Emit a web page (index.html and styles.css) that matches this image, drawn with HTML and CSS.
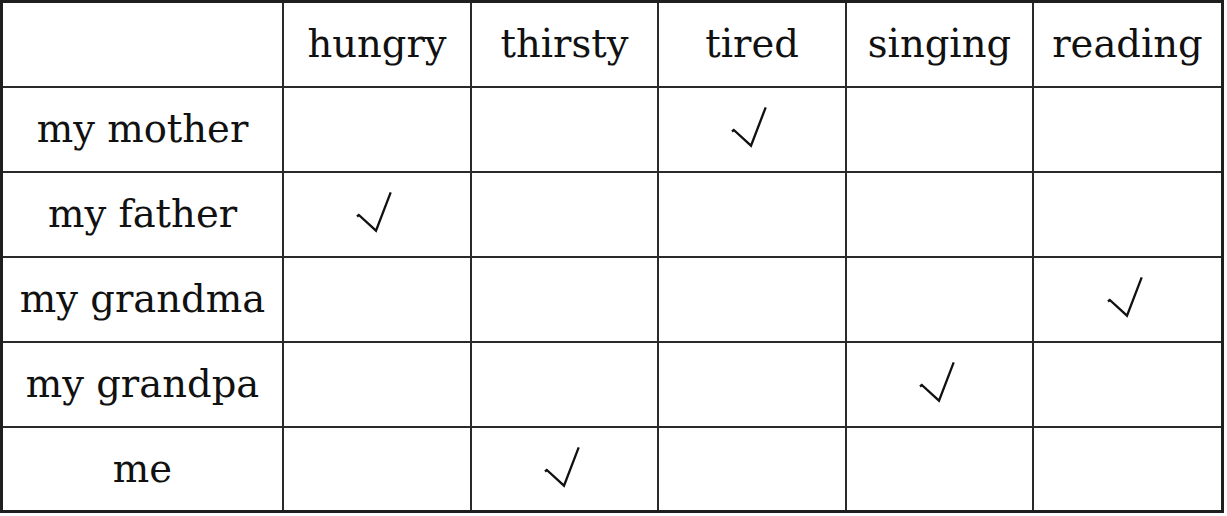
FILE: index.html
```html
<!DOCTYPE html>
<html lang="en">
<head>
<meta charset="utf-8">
<title>Table</title>
<link rel="stylesheet" href="styles.css">
</head>
<body>
<div class="grid">
  <div class="cell"></div>
  <div class="cell">hungry</div>
  <div class="cell">thirsty</div>
  <div class="cell">tired</div>
  <div class="cell">singing</div>
  <div class="cell">reading</div>

  <div class="cell">my mother</div>
  <div class="cell"></div>
  <div class="cell"></div>
  <div class="cell"><svg class="tick" viewBox="0 0 36 42"><polyline points="1,25.5 2.8,24 20,39.7 34.7,1.3"/></svg></div>
  <div class="cell"></div>
  <div class="cell"></div>

  <div class="cell">my father</div>
  <div class="cell"><svg class="tick" viewBox="0 0 36 42"><polyline points="1,25.5 2.8,24 20,39.7 34.7,1.3"/></svg></div>
  <div class="cell"></div>
  <div class="cell"></div>
  <div class="cell"></div>
  <div class="cell"></div>

  <div class="cell">my grandma</div>
  <div class="cell"></div>
  <div class="cell"></div>
  <div class="cell"></div>
  <div class="cell"></div>
  <div class="cell"><svg class="tick" viewBox="0 0 36 42"><polyline points="1,25.5 2.8,24 20,39.7 34.7,1.3"/></svg></div>

  <div class="cell">my grandpa</div>
  <div class="cell"></div>
  <div class="cell"></div>
  <div class="cell"></div>
  <div class="cell"><svg class="tick" viewBox="0 0 36 42"><polyline points="1,25.5 2.8,24 20,39.7 34.7,1.3"/></svg></div>
  <div class="cell"></div>

  <div class="cell">me</div>
  <div class="cell"></div>
  <div class="cell"><svg class="tick" viewBox="0 0 36 42"><polyline points="1,25.5 2.8,24 20,39.7 34.7,1.3"/></svg></div>
  <div class="cell"></div>
  <div class="cell"></div>
  <div class="cell"></div>
</div>
</body>
</html>
```

FILE: styles.css
```css
html, body {
  margin: 0;
  padding: 0;
  background: #ffffff;
}

.grid {
  display: grid;
  width: 1224px;
  height: 513px;
  box-sizing: border-box;
  border: 3px solid #1f1f1f;
  background: #2a2a2a;
  gap: 2px;
  grid-template-columns: 279px 186px 185px 186px 185px 187px;
  grid-template-rows: 83px 83px 83px 83px 83px 82px;
  font-family: "DejaVu Serif", "Liberation Serif", serif;
  font-size: 38.5px;
  color: #111111;
}

.cell {
  background: #ffffff;
  display: flex;
  align-items: center;
  justify-content: center;
  white-space: nowrap;
  padding-bottom: 2px;
  box-sizing: border-box;
}

.tick {
  width: 36px;
  height: 42px;
  margin-right: 6px;
  margin-bottom: 3px;
  fill: none;
  stroke: #111111;
  stroke-width: 2.3;
  stroke-linejoin: miter;
}
```
